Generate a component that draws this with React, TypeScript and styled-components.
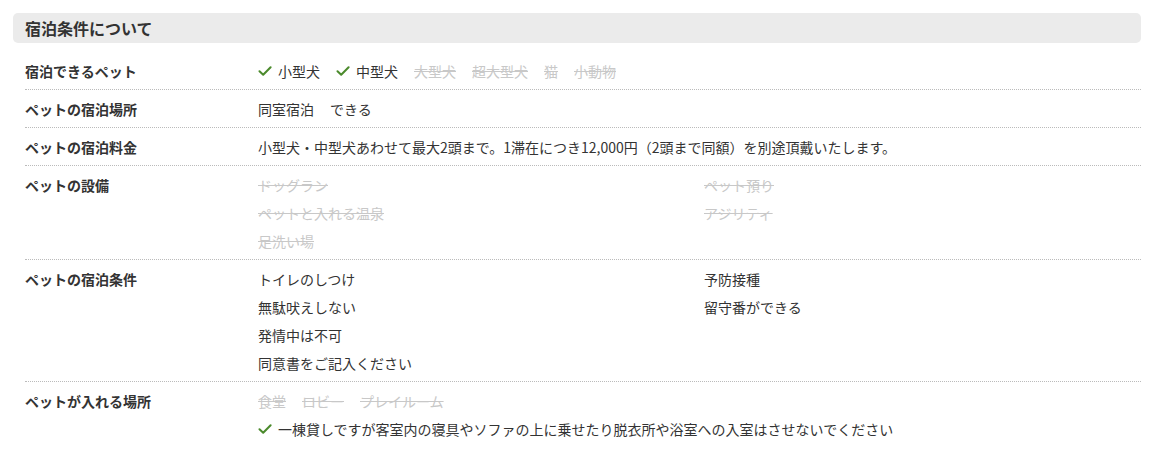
import React from 'react';
import styled, { createGlobalStyle } from 'styled-components';

type Item = { text: string; ok: boolean; check?: boolean };

type RowModel = {
  label: string;
  lines?: Item[][];
  grid?: Item[][];
};

const on = (text: string, check = false): Item => ({ text, ok: true, check });
const off = (text: string): Item => ({ text, ok: false });

const rows: RowModel[] = [
  {
    label: '宿泊できるペット',
    lines: [[on('小型犬', true), on('中型犬', true), off('大型犬'), off('超大型犬'), off('猫'), off('小動物')]],
  },
  { label: 'ペットの宿泊場所', lines: [[on('同室宿泊'), on('できる')]] },
  {
    label: 'ペットの宿泊料金',
    lines: [[on('小型犬・中型犬あわせて最大2頭まで。1滞在につき12,000円（2頭まで同額）を別途頂戴いたします。')]],
  },
  {
    label: 'ペットの設備',
    grid: [
      [off('ドッグラン'), off('ペット預り')],
      [off('ペットと入れる温泉'), off('アジリティ')],
      [off('足洗い場')],
    ],
  },
  {
    label: 'ペットの宿泊条件',
    grid: [
      [on('トイレのしつけ'), on('予防接種')],
      [on('無駄吠えしない'), on('留守番ができる')],
      [on('発情中は不可')],
      [on('同意書をご記入ください')],
    ],
  },
  {
    label: 'ペットが入れる場所',
    lines: [
      [off('食堂'), off('ロビー'), off('プレイルーム')],
      [on('一棟貸しですが客室内の寝具やソファの上に乗せたり脱衣所や浴室への入室はさせないでください', true)],
    ],
  },
];

function CheckIcon() {
  return (
    <CheckSvg viewBox="0 0 14 14" aria-hidden>
      <path d="M1.5 7.2 L5.2 10.8 L12.6 3.2" />
    </CheckSvg>
  );
}

function Entry({ item }: { item: Item }) {
  return (
    <EntryText $ok={item.ok}>
      {item.check && <CheckIcon />}
      {item.text}
    </EntryText>
  );
}

export default function App() {
  return (
    <>
      <GlobalStyle />
      <Section>
        <Header>宿泊条件について</Header>
        <Table>
          {rows.map((row) => (
            <Row key={row.label}>
              <Label>{row.label}</Label>
              {row.lines && (
                <Value>
                  {row.lines.map((line, i) => (
                    <Line key={i}>
                      {line.map((item) => (
                        <Entry key={item.text} item={item} />
                      ))}
                    </Line>
                  ))}
                </Value>
              )}
              {row.grid && (
                <ValueGrid>
                  {row.grid.map((line, i) =>
                    [0, 1].map((c) => (
                      <Line key={`${i}-${c}`}>{line[c] && <Entry item={line[c]} />}</Line>
                    ))
                  )}
                </ValueGrid>
              )}
            </Row>
          ))}
        </Table>
      </Section>
    </>
  );
}

const GlobalStyle = createGlobalStyle`
  body {
    margin: 0;
    background: #fff;
    font-family: "Noto Sans CJK JP", "Noto Sans", sans-serif;
    color: #333;
  }
`;

const Section = styled.section`
  width: 1128px;
  margin: 13px 0 0 13px;
`;

const Header = styled.h2`
  margin: 0 0 9px;
  height: 30px;
  line-height: 30px;
  padding: 0 12px;
  background: #ebebeb;
  border-radius: 5px;
  font-size: 16px;
  font-weight: 700;
  color: #333;
`;

const Table = styled.div`
  margin-left: 12px;
  display: flex;
  flex-direction: column;
`;

const Row = styled.div`
  display: grid;
  grid-template-columns: 233px 1fr;
  padding: 5px 0 4px;
  border-bottom: 1px dotted #bbb;

  &:last-child {
    border-bottom: none;
  }
`;

const Label = styled.div`
  font-size: 14px;
  font-weight: 700;
  line-height: 28px;
  color: #333;
`;

const Value = styled.div`
  display: flex;
  flex-direction: column;
`;

const ValueGrid = styled.div`
  display: grid;
  grid-template-columns: 446px 1fr;
`;

const Line = styled.div`
  display: flex;
  gap: 16px;
  height: 28px;
  align-items: center;
  font-size: 14px;
`;

const EntryText = styled.span<{ $ok: boolean }>`
  display: inline-flex;
  align-items: center;
  gap: 6px;
  white-space: nowrap;
  color: ${({ $ok }) => ($ok ? '#333' : '#c8c8c8')};
  text-decoration: ${({ $ok }) => ($ok ? 'none' : 'line-through')};
`;

const CheckSvg = styled.svg`
  width: 14px;
  height: 14px;
  flex: none;
  fill: none;
  stroke: #4b8a2c;
  stroke-width: 2;
  stroke-linecap: round;
  stroke-linejoin: round;
`;
